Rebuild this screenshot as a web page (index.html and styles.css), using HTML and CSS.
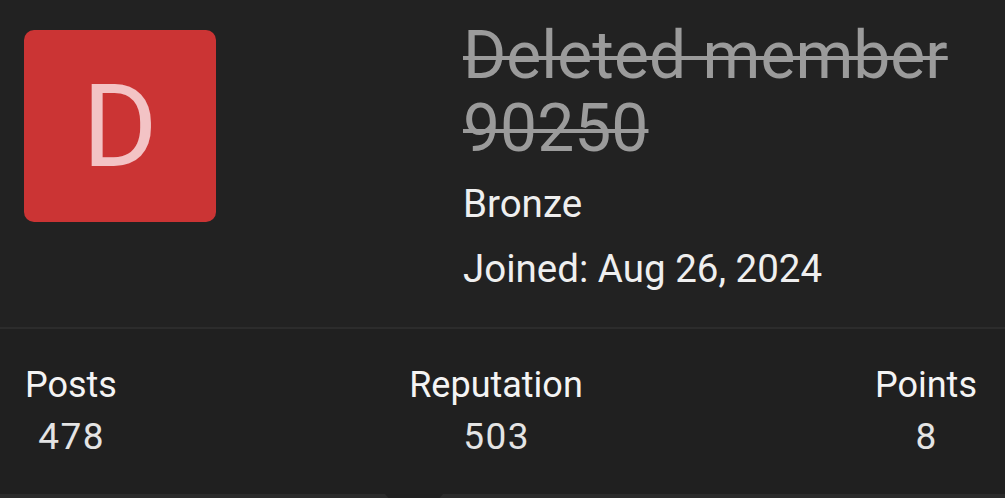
FILE: index.html
```html
<!DOCTYPE html>
<html lang="en">
<head>
<meta charset="utf-8">
<title>Member card</title>
<link rel="stylesheet" href="styles.css">
</head>
<body>
<div class="card">
  <div class="head">
    <div class="avatar"><span class="avatar-letter">D</span></div>
    <div class="info">
      <div class="name">Deleted member 90250</div>
      <div class="rank">Bronze</div>
      <div class="joined">Joined: Aug 26, 2024</div>
    </div>
  </div>
  <div class="stats">
    <dl class="stat"><dt>Posts</dt><dd>478</dd></dl>
    <dl class="stat"><dt>Reputation</dt><dd>503</dd></dl>
    <dl class="stat"><dt>Points</dt><dd>8</dd></dl>
  </div>
  <div class="foot"><span class="foot-arrow"></span></div>
</div>
</body>
</html>
```

FILE: styles.css
```css
html, body {
  margin: 0;
  padding: 0;
  background: #222222;
}
body {
  font-family: Roboto, "Liberation Sans", sans-serif;
  width: 1005px;
  height: 498px;
  overflow: hidden;
}
.card {
  display: flex;
  flex-direction: column;
  height: 498px;
}
.head {
  display: flex;
  align-items: flex-start;
  padding: 0 24px 0 24px;
  height: 327px;
  box-sizing: border-box;
  background: #222222;
}
.avatar {
  width: 192px;
  height: 192px;
  margin-top: 30px;
  border-radius: 10px;
  background: #cb3434;
  display: flex;
  align-items: center;
  justify-content: center;
  flex: none;
}
.avatar-letter {
  color: #f3c3c5;
  font-size: 115px;
  line-height: 1;
}
.info {
  margin-left: 247px;
  padding-top: 19px;
}
.name {
  color: #9b9b9b;
  font-size: 66px;
  line-height: 73px;
  text-decoration: line-through;
  text-decoration-thickness: 4px;
  width: 500px;
}
.rank, .joined {
  color: #efefef;
  font-size: 38.5px;
  line-height: 65px;
}
.rank {
  margin-top: 6px;
}
.stats {
  display: flex;
  justify-content: space-between;
  align-items: flex-start;
  border-top: 2px solid #2c2c2c;
  background: #202020;
  padding: 30px 28px 0 25px;
  flex: 1;
}
.stat {
  margin: 0;
  text-align: center;
  font-size: 36px;
  line-height: 52px;
}
.stat dt {
  color: #f4f4f4;
}
.stat dd {
  margin: 0;
  color: #e4e4e4;
  font-size: 37px;
  letter-spacing: 1.5px;
  text-indent: 1.5px;
}
.foot {
  position: relative;
  height: 4px;
  background: #2b2b2b;
}
.foot-arrow {
  position: absolute;
  left: 385px;
  width: 58px;
  top: 0;
  height: 4px;
  background: #202020;
  clip-path: polygon(0 0, 100% 0, 94% 100%, 6% 100%);
}
```
